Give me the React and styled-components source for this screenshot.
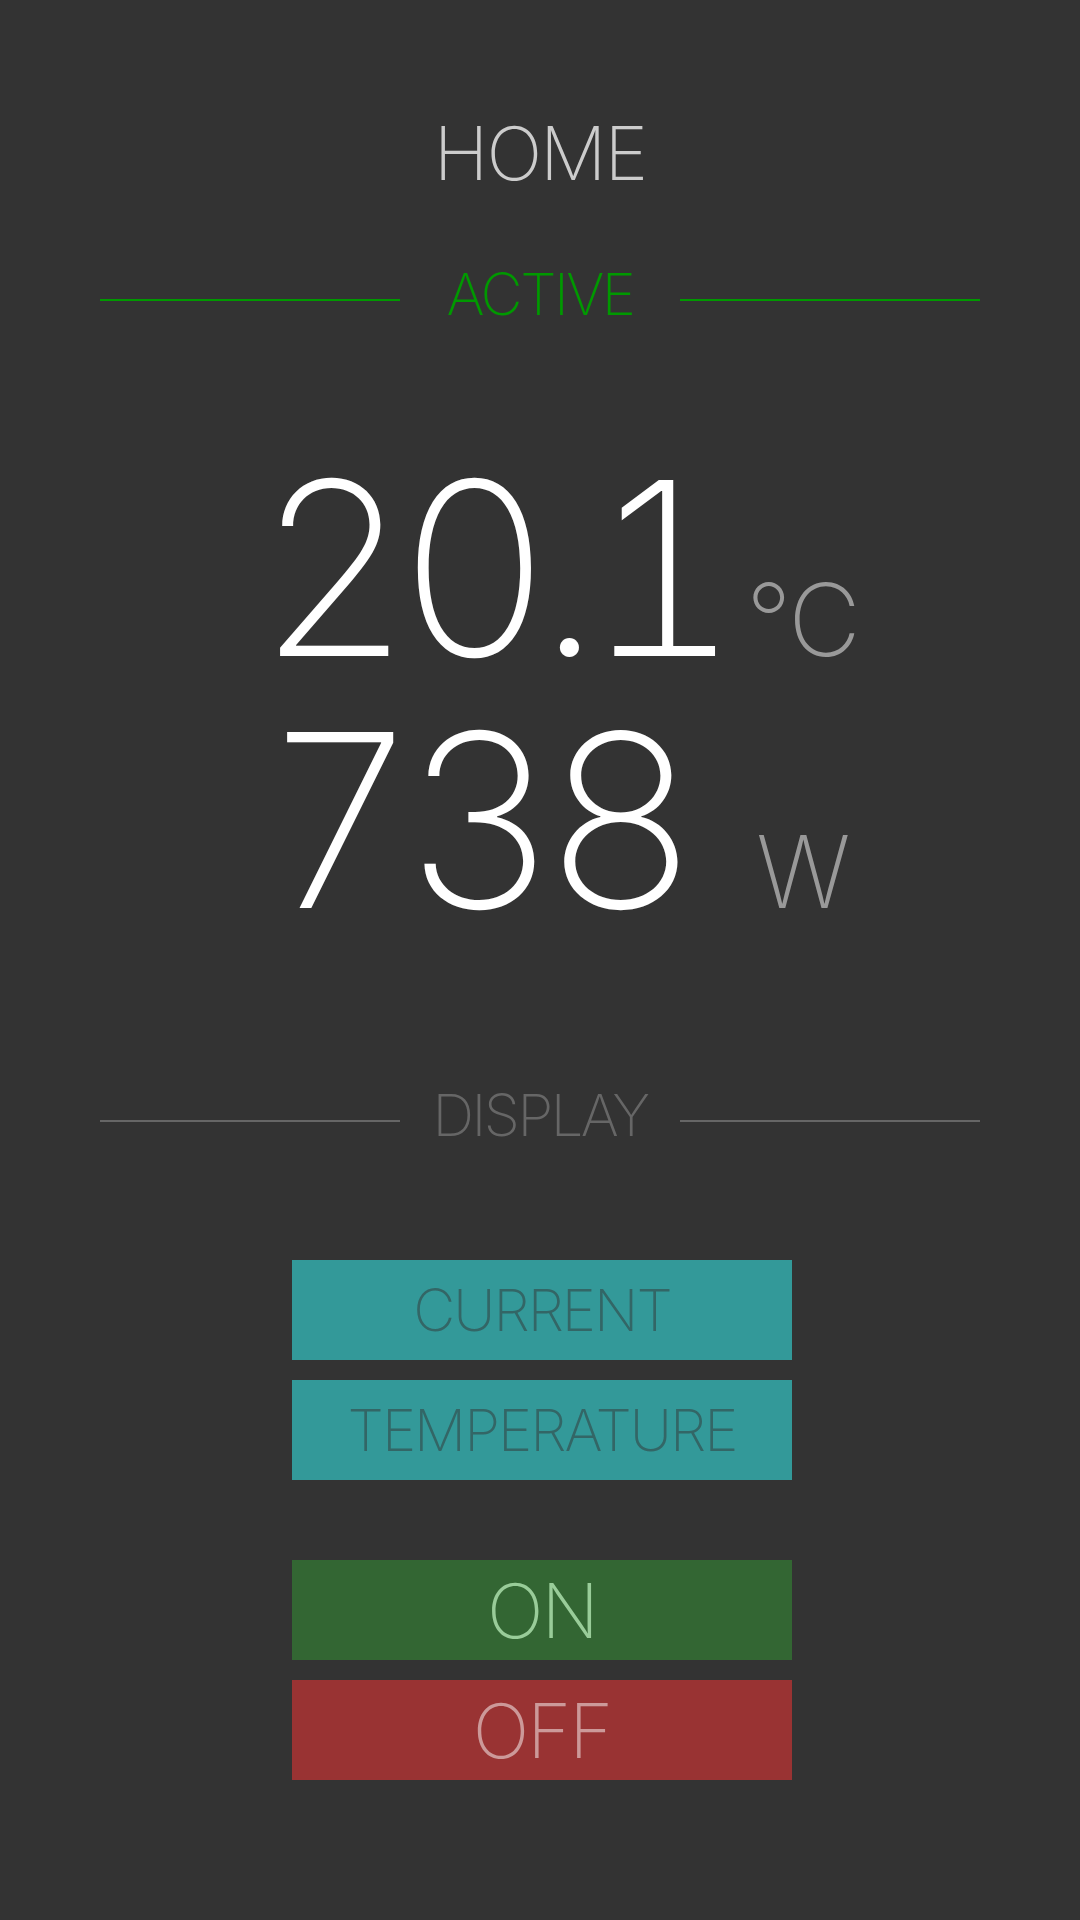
import { Fragment } from 'react';
import { createGlobalStyle, styled } from 'styled-components';

const GlobalStyle = createGlobalStyle`
  html, body {
    margin: 0;
    padding: 0;
    background: #333333;
  }
  body {
    font-family: Inter, "Helvetica Neue", "Liberation Sans", sans-serif;
    font-weight: 200;
  }
`

const Page = styled.div`
  min-height: 1920px;
  display: flex;
  flex-direction: column;
  padding-top: 116px;
  box-sizing: border-box;
`

const Title = styled.h1`
  margin: 0;
  font-size: 74px;
  line-height: 1;
  font-weight: 200;
  color: #cccccc;
  text-align: center;
  letter-spacing: -2px;
`

const Divider = styled.div`
  display: grid;
  grid-template-columns: 1fr 280px 1fr;
  align-items: center;
  padding: 0 100px;
  margin-top: ${(p) => p.$top}px;
  color: ${(p) => p.$color};
`

const Rule = styled.span`
  height: 2px;
  margin-top: 12px;
  background: currentColor;
`

const Label = styled.span`
  font-size: 58px;
  line-height: 1;
  text-align: center;
  letter-spacing: -2.5px;
`

const Readings = styled.div`
  display: grid;
  grid-template-columns: 490px 110px;
  justify-content: center;
  align-items: baseline;
  padding-left: 32px;
  margin-top: 119px;
`

const Value = styled.span`
  font-size: 242px;
  line-height: 252px;
  color: #ffffff;
  font-feature-settings: 'tnum';
  letter-spacing: -16px;
  padding-left: ${(p) => p.$shift || 0}px;
`

const Unit = styled.span`
  font-size: 100px;
  line-height: 1;
  color: #999999;
  letter-spacing: -2px;
  padding-left: ${(p) => p.$shift || 0}px;
`

const ButtonGroup = styled.div`
  display: flex;
  flex-direction: column;
  align-items: center;
  gap: 20px;
  padding-left: 4px;
  margin-top: ${(p) => p.$top}px;
`

const Button = styled.button`
  width: 500px;
  height: 100px;
  border: none;
  padding: 0;
  display: flex;
  align-items: center;
  justify-content: center;
  font-family: inherit;
  font-weight: 200;
  font-size: ${(p) => p.$size}px;
  line-height: 1;
  letter-spacing: -2px;
  background: ${(p) => p.$bg};
  color: ${(p) => p.$fg};
  cursor: pointer;
`

export default function App() {
  const readings = [
    { value: '20.1', unit: '°C', valueShift: 0, unitShift: 0 },
    { value: '738', unit: 'W', valueShift: 6, unitShift: 10 },
  ];

  return (
    <>
      <GlobalStyle />
      <Page>
        <Title>HOME</Title>

        <Divider $top={75} $color="#009900">
          <Rule />
          <Label>ACTIVE</Label>
          <Rule />
        </Divider>

        <Readings>
          {readings.map((r) => (
            <Fragment key={r.unit}>
              <Value $shift={r.valueShift}>{r.value}</Value>
              <Unit $shift={r.unitShift}>{r.unit}</Unit>
            </Fragment>
          ))}
        </Readings>

        <Divider $top={140} $color="#666666">
          <Rule />
          <Label>DISPLAY</Label>
          <Rule />
        </Divider>

        <ButtonGroup $top={116}>
          <Button $size={58} $bg="#339999" $fg="#336666">CURRENT</Button>
          <Button $size={58} $bg="#339999" $fg="#336666">TEMPERATURE</Button>
        </ButtonGroup>

        <ButtonGroup $top={80}>
          <Button $size={75} $bg="#336633" $fg="#99cc99">ON</Button>
          <Button $size={75} $bg="#993333" $fg="#cc9999">OFF</Button>
        </ButtonGroup>
      </Page>
    </>
  );
}
